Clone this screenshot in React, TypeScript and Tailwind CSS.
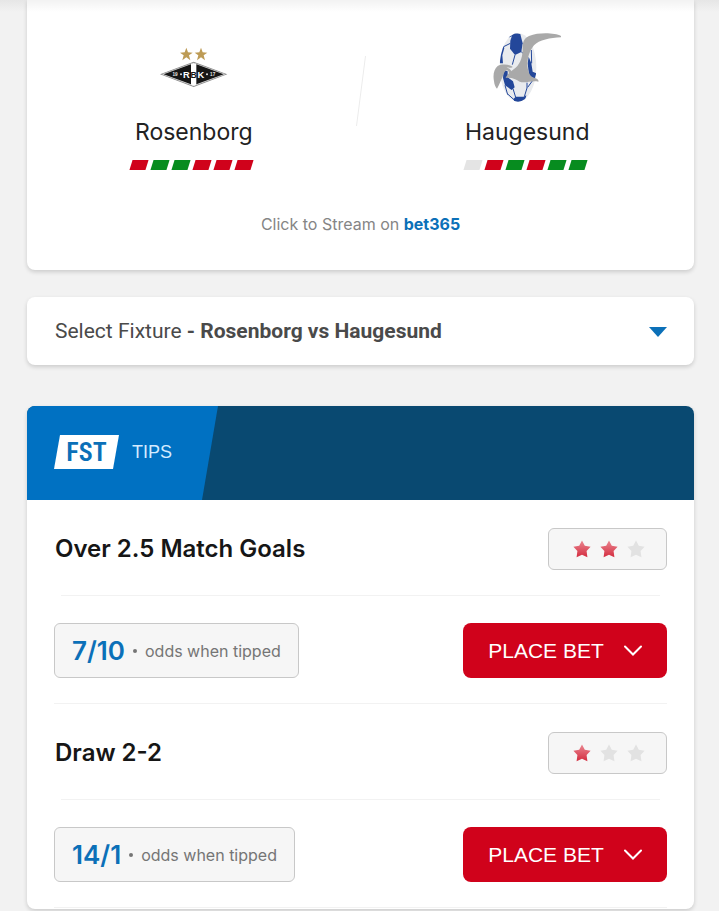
import { useState } from 'react'
import { clsx } from 'clsx'

type Result = 'W' | 'L' | 'D'

const homeForm: Result[] = ['L', 'W', 'W', 'L', 'L', 'L']
const awayForm: Result[] = ['D', 'L', 'W', 'L', 'W', 'W']

const tips = [
  { title: 'Over 2.5 Match Goals', odds: '7/10', rating: 2 },
  { title: 'Draw 2-2', odds: '14/1', rating: 1 }
]

const starPath = 'M9 0.5 L11.8 5.8 L17.6 6.8 L13.6 11 L14.4 17.2 L9 14.8 L3.6 17.2 L4.4 11 L0.4 6.8 L6.2 5.8 Z'

function RosenborgCrest() {
  return (
    <svg viewBox="112 0 219 219" className="w-[73px] h-[73px]" role="img" aria-label="Rosenborg crest">
      <g fill="#bd9b55">
        <path d="M200 53 L205 67 L219 68 L208 76 L212 91 L200 82 L188 91 L192 76 L181 68 L195 67 Z" />
        <path d="M244 53 L249 67 L263 68 L252 76 L256 91 L244 82 L232 91 L236 76 L225 68 L239 67 Z" />
      </g>
      <path d="M121 133 L222 95 L323 133 L222 171 Z" fill="#8b8b8b" />
      <path d="M127 133 L222 98 L317 133 L222 168 Z" fill="#e4e4e4" />
      <path d="M132 133 L222 100 L312 133 L222 166 Z" fill="#161616" />
      <path d="M214 102 L222 99 L230 102 V164 L222 167 L214 164 Z" fill="#ffffff" />
      <g fontFamily="'Liberation Sans', sans-serif" fontWeight="700" textAnchor="middle">
        <text x="200" y="144" fontSize="28" fill="#ffffff">R</text>
        <text x="222" y="144" fontSize="26" fill="#161616">B</text>
        <text x="244" y="144" fontSize="28" fill="#ffffff">K</text>
        <text x="166" y="138" fontSize="14" fill="#e6e6e6">19</text>
        <text x="279" y="138" fontSize="14" fill="#e6e6e6">17</text>
      </g>
      <g fill="#e6e6e6">
        <circle cx="184" cy="133" r="3" />
        <circle cx="262" cy="133" r="3" />
      </g>
    </svg>
  )
}

function HaugesundCrest() {
  return (
    <svg viewBox="122 30 219 219" className="w-[73px] h-[73px]" role="img" aria-label="Haugesund crest">
      <clipPath id="ball">
        <ellipse cx="203" cy="142" rx="55" ry="103" />
      </clipPath>
      <ellipse cx="203" cy="142" rx="55" ry="103" fill="#e9ebee" />
      <g clipPath="url(#ball)">
        <g fill="#23479a">
          <path d="M188 38 L210 42 L217 70 L213 96 L194 105 L179 86 L180 62 Z" />
          <path d="M148 130 L146 96 L158 76 L162 84 L156 106 L158 130 Z" />
          <path d="M160 150 L172 154 L172 172 L188 184 L193 202 L184 210 L164 196 L158 174 Z" />
          <path d="M235 110 L243 130 L247 155 L258 160 L254 178 L236 166 L232 130 Z" />
          <path d="M190 236 L196 230 L220 230 L228 226 L222 250 L192 250 Z" />
        </g>
        <g fill="none" stroke="#23479a" strokeWidth="3">
          <path d="M160 80 L180 70 M168 54 L188 46 M194 105 L186 134 M213 96 L224 104 M188 206 L196 232 M222 230 L230 204 L230 188 M164 196 L172 224 M172 222 L192 240" />
          <path d="M243 90 L244 130 M248 180 L232 202" />
        </g>
      </g>
      <g fill="#a9a9a9">
        <path d="M332 48 C314 39 268 36 236 48 C219 55 216 70 217 91 C216 116 207 137 190 148 C178 157 169 166 166 174 C180 171 198 177 208 185 C224 191 246 180 264 185 C267 180 258 175 247 172 C236 166 232 150 231 135 C231 111 239 91 251 76 C266 60 300 53 332 52 Z" />
        <path d="M187 141 C177 132 154 132 142 138 C131 148 127 164 131 184 C132 195 136 202 140 206 C146 196 151 182 157 170 C160 160 163 153 169 151 C176 151 177 160 175 168 L184 158 C183 150 176 144 169 143 C176 141 184 146 187 141 Z" />
      </g>
    </svg>
  )
}

function FormGuide({ results }: { results: Result[] }) {
  return (
    <div className="flex gap-[5px] mt-[14px] pr-1">
      {results.map((result, index) => (
        <span
          key={index}
          className={clsx(
            'w-4 h-[10px] -skew-x-[17deg]',
            result === 'W' && 'bg-[#078c1f]',
            result === 'L' && 'bg-[#d0021b]',
            result === 'D' && 'bg-[#e4e4e4]'
          )}
        />
      ))}
    </div>
  )
}

function Rating({ value }: { value: number }) {
  return (
    <div
      className="flex items-center justify-center gap-[9px] w-[119px] h-[42px] pl-0.5 bg-[#f6f6f6] border border-[#c8c8c8] rounded-md"
      role="img"
      aria-label={`${value} out of 3 stars`}
    >
      {[1, 2, 3].map(star => (
        <svg key={star} viewBox="0 0 18 18" className="w-[18px] h-[18px]">
          <path d={starPath} fill={star <= value ? 'url(#star-red)' : '#e2e2e2'} />
        </svg>
      ))}
    </div>
  )
}

export default function App() {
  const [fixture, setFixture] = useState('Rosenborg vs Haugesund')

  return (
    <div className="relative min-h-screen bg-[#f2f2f2] pl-[27px] pr-[25px] pb-[2px] font-['Inter','Liberation_Sans',sans-serif]">
      {/* Shadow under the page header */}
      <div className="absolute inset-x-0 top-0 h-3 bg-linear-to-b from-black/5 to-transparent pointer-events-none" />

      <svg width="0" height="0" className="absolute" aria-hidden="true">
        <linearGradient id="star-red" x1="0" y1="0" x2="0" y2="1">
          <stop offset="0" stopColor="#ea8791" />
          <stop offset="1" stopColor="#d42d40" />
        </linearGradient>
      </svg>

      {/* Match */}
      <section className="bg-white rounded-b-lg shadow-[0_2px_4px_rgba(0,0,0,0.16)] pt-[30px] pb-[34px]">
        <div className="flex">
          <div className="flex-1 flex flex-col items-center">
            <RosenborgCrest />
            <h2 className="mt-[15px] text-[23px] leading-7 text-[#222222]">Rosenborg</h2>
            <FormGuide results={homeForm} />
          </div>
          <svg viewBox="0 0 10 70" className="w-[10px] h-[70px] -mx-[5px] mt-[26px]" aria-hidden="true">
            <path d="M9.5 0 L0.5 70" stroke="#ececec" strokeWidth="1" />
          </svg>
          <div className="flex-1 flex flex-col items-center">
            <HaugesundCrest />
            <h2 className="mt-[15px] text-[23px] leading-7 text-[#222222]">Haugesund</h2>
            <FormGuide results={awayForm} />
          </div>
        </div>
        <p className="mt-[42px] text-center text-base leading-6 text-[#858585]">
          Click to Stream on <a href="#" className="font-bold text-[#0b70b8]">bet365</a>
        </p>
      </section>

      {/* Fixture picker */}
      <section className="flex items-center mt-[27px] h-[68px] pt-0.5 pl-7 pr-[27px] bg-white rounded-lg shadow-[0_2px_4px_rgba(0,0,0,0.16)] text-[21px] text-[#4a4a4a] font-['Roboto','Liberation_Sans',sans-serif]">
        <label htmlFor="fixture" className="whitespace-pre">Select Fixture <b>- </b></label>
        <select
          id="fixture"
          value={fixture}
          onChange={(e) => setFixture(e.target.value)}
          className="flex-1 min-w-0 appearance-none bg-transparent font-bold focus:outline-none"
        >
          <option>Rosenborg vs Haugesund</option>
        </select>
        <svg viewBox="0 0 18 10" className="w-[18px] h-[10px] pointer-events-none" aria-hidden="true">
          <path d="M0 0 H18 L9 10 Z" fill="#0b70b8" />
        </svg>
      </section>

      {/* Tips */}
      <section className="mt-[41px] pb-px bg-white rounded-lg overflow-hidden shadow-[0_2px_4px_rgba(0,0,0,0.16)]">
        <header className="h-[94px] bg-[#094971]">
          <div className="flex items-center gap-[13px] w-[191px] h-full pl-[27px] pb-0.5 bg-[#0071c2] [clip-path:polygon(0_0,100%_0,175px_100%,0_100%)]">
            <span className="flex items-center justify-center w-[65px] h-[34px] bg-white text-[26px] leading-none font-semibold text-[#0b70b8] font-['Roboto_Condensed','Open_Sans_Condensed','Roboto',sans-serif] [clip-path:polygon(6px_0,100%_0,59px_100%,0_100%)]">
              FST
            </span>
            <h3 className="text-lg text-[#d4ebff] font-['Liberation_Sans',sans-serif]">TIPS</h3>
          </div>
        </header>

        {tips.map(tip => (
          <article key={tip.title} className="mx-[27px] border-b border-[#f2f2f2]">
            <div className="flex items-center justify-between pt-7 pb-[25px]">
              <h4 className="pl-px text-[24px] leading-8 font-semibold text-[#161616]">{tip.title}</h4>
              <Rating value={tip.rating} />
            </div>
            <hr className="mx-[7px] border-[#f2f2f2]" />
            <div className="flex items-center justify-between pt-[27px] pb-[25px]">
              <div className="flex items-center h-[55px] px-[17px] bg-[#f6f6f6] border border-[#c8c8c8] rounded-md">
                <span className="text-[26px] font-semibold text-[#0b70b8]">{tip.odds}</span>
                <span className="w-1 h-1 mx-2 rounded-full bg-[#757575]" />
                <span className="text-base text-[#757575]">odds when tipped</span>
              </div>
              <button
                type="button"
                className="flex items-center justify-center gap-5 w-[204px] h-[55px] bg-[#d0021b] rounded-lg text-[21px] text-white font-['Liberation_Sans',sans-serif]"
              >
                PLACE BET
                <svg viewBox="0 0 18 11" className="w-[18px] h-[11px]" fill="none" aria-hidden="true">
                  <path d="M1 1.5 L9 9.5 L17 1.5" stroke="#ffffff" strokeWidth="2" strokeLinecap="round" />
                </svg>
              </button>
            </div>
          </article>
        ))}
      </section>
    </div>
  )
}
